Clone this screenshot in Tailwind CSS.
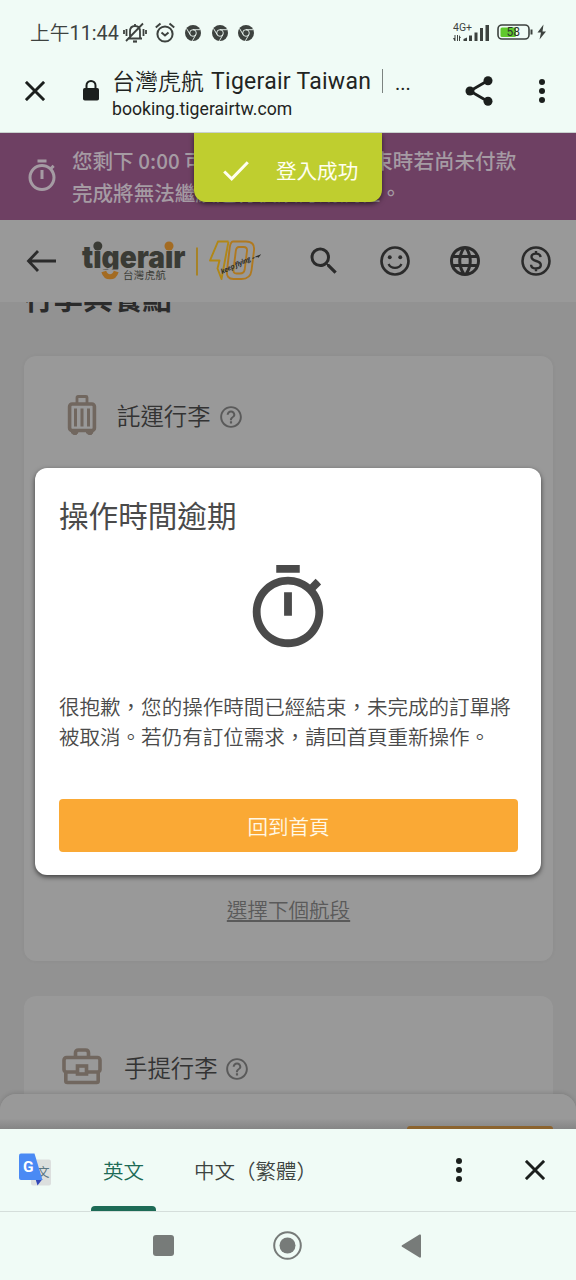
<!DOCTYPE html>
<html lang="zh-Hant">
<head>
<meta charset="utf-8">
<title>台灣虎航 Tigerair Taiwan</title>
<script src="https://cdn.jsdelivr.net/npm/@tailwindcss/browser@4"></script>
</head>
<body class="w-[576px] h-[1280px] overflow-hidden bg-[#f0fbf6] font-['Noto_Sans_CJK_TC',sans-serif]">
<svg class="hidden">
  <symbol id="timer" viewBox="0 0 24 24"><path fill="currentColor" d="M15 1H9v2h6V1zm-4 13h2V8h-2v6zm8.03-6.61l1.42-1.42c-.43-.51-.9-.99-1.41-1.41l-1.42 1.42C16.07 4.74 14.12 4 12 4c-4.97 0-9 4.03-9 9s4.02 9 9 9 9-4.03 9-9c0-2.12-.74-4.07-1.97-5.61zM12 20c-3.87 0-7-3.13-7-7s3.13-7 7-7 7 3.13 7 7-3.13 7-7 7z"/></symbol>
  <symbol id="help" viewBox="0 0 24 24"><path fill="currentColor" d="M11 18h2v-2h-2v2zm1-16C6.48 2 2 6.48 2 12s4.48 10 10 10 10-4.48 10-10S17.52 2 12 2zm0 18.2c-4.5 0-8.2-3.7-8.2-8.2s3.7-8.2 8.2-8.2 8.2 3.7 8.2 8.2-3.7 8.2-8.2 8.2zm0-14.2c-2.21 0-4 1.79-4 4h1.9c0-1.1.9-2.1 2.1-2.1s2.1 1 2.1 2.1c0 2-3.1 1.75-3.1 5h1.9c0-2.25 3.1-2.5 3.1-5 0-2.21-1.79-4-4-4z"/></symbol>
  <symbol id="chrome" viewBox="0 0 16 16"><circle cx="8" cy="8" r="8" fill="#3d423f"/><g fill="none" stroke="#f0fbf6" stroke-width=".9"><circle cx="8" cy="8" r="3.3"/><path d="M8 4.7h7.2M5.1 9.6 1.6 3.6M10.9 9.6 7.4 15.8"/></g></symbol>
  <symbol id="cross" viewBox="0 0 20 20"><path d="M.9.9l18.2 18.2M19.1.9.9 19.1" stroke="#1b1f1d" stroke-width="2.9" fill="none"/></symbol>
  <symbol id="dots" viewBox="0 0 6 24"><g fill="#1b1f1d"><circle cx="3" cy="3" r="3"/><circle cx="3" cy="12" r="3"/><circle cx="3" cy="21" r="3"/></g></symbol>
</svg>
<div class="flex h-full flex-col">

  <div class="flex h-[58px] shrink-0 items-center pt-[7px] pl-[30px] text-[#3d423f]">
    <div class="w-[90px] whitespace-nowrap text-[19.800px] leading-[24px] font-[Roboto,'Noto_Sans_CJK_TC',sans-serif]"><span class="font-[350] font-['Noto_Sans_CJK_TC']">上午</span>11:44</div>
    <svg class="ml-[3px] h-[22px] w-[24px]" viewBox="0 0 24 22" fill="none" stroke="#3d423f" stroke-width="1.8"><path d="M5 16.500h14M7 16V9.500C7 6 9 4 12 4s5 2 5 5.500V16M12 4V2M3 19 20 1.500M1 8v4M3.500 7v7M20.500 7v7M23 8v4"/><path d="M10 19.500h4" stroke-width="2.200"/></svg>
    <svg class="ml-[8px] h-[22px] w-[20px]" viewBox="0 0 20 22" fill="none" stroke="#3d423f" stroke-width="2"><circle cx="10" cy="12" r="7.600"/><path d="M.8 5.500 5.500 1.500M19.200 5.500 14.500 1.500M6.500 10.500 10 13.500 13.500 10.500"/></svg>
    <svg class="ml-[10px] size-4"><use href="#chrome"/></svg>
    <svg class="ml-[11px] size-4"><use href="#chrome"/></svg>
    <svg class="ml-[10px] size-4"><use href="#chrome"/></svg>
    <svg class="ml-[199px] h-[20px] w-[37px]" viewBox="0 0 37 20"><text x="0" y="8" font-family="Roboto" font-size="10" textLength="19" lengthAdjust="spacingAndGlyphs" fill="#3d423f">4G+</text><g fill="#3d423f"><path d="M2.500 12v6H1.500L0 15h1.500v-3zM4 12h1v6H4zM6 12l2 3H7v3H6z"/><path d="M10.500 18v-2l3.500-1.500V18zM16 18v-5.500h3V18zM21.500 18V9.500h3V18zM27 18V5h3v13zM32.500 18V2h3.500v16z"/></g></svg>
    <svg class="ml-[7px] -mt-[1px] h-[18px] w-[50px]" viewBox="0 0 50 18"><rect x="1" y="2" width="31" height="14" rx="4" fill="none" stroke="#3d423f" stroke-width="1.600"/><rect x="3.500" y="4.500" width="15.500" height="9.500" rx="1.500" fill="#5fc92c"/><text x="9.500" y="13.300" font-family="Roboto" font-size="12" textLength="13.500" fill="#2e332f">58</text><path d="M34.500 6.500v5" stroke="#3d423f" stroke-width="2"/><path d="M46.500 1.500 40.500 9.500h3.500l-1.500 7L49 8.500h-3.500z" fill="#3d423f"/></svg>
  </div>

  <div class="flex h-[75px] shrink-0 items-start border-b border-[#c9d2ce] pl-[25px]">
    <svg class="mt-[23px] size-5"><use href="#cross"/></svg>
    <svg class="mt-[22px] ml-[38px] h-[21px] w-[16px]" viewBox="0 0 16 21"><path d="M3.500 9V5.500a4.500 4.500 0 0 1 9 0V9" fill="none" stroke="#1b1f1d" stroke-width="2"/><rect y="8" width="16" height="12.500" rx="1.800" fill="#1b1f1d"/></svg>
    <div class="mt-[8px] ml-[13px] w-[330px] whitespace-nowrap text-[#1f2422] font-[Roboto,'Noto_Sans_CJK_TC',sans-serif]">
      <div class="flex h-[30px] items-center text-[23px] leading-[30px]"><span class="-mt-[3px] font-[350] font-['Noto_Sans_CJK_TC']">台灣虎航</span><span class="ml-[7px] mt-[2px] w-[161px] tracking-[0.280px]">Tigerair Taiwan</span><span class="ml-[10px] h-[24px] w-px bg-[#7c8380]"></span><span class="ml-[12px] mt-[4px] text-[20px]">...</span></div>
      <div class="text-[17.650px] leading-[26px]">booking.tigerairtw.com</div>
    </div>
    <svg class="mt-[18px] ml-[23px] h-[30px] w-[28px]" viewBox="0 0 28 30"><path d="M23 4.500 5 15l18 10.500" fill="none" stroke="#1b1f1d" stroke-width="2.800"/><g fill="#1b1f1d"><circle cx="23" cy="4.700" r="4.500"/><circle cx="5" cy="15" r="4.500"/><circle cx="23" cy="25.300" r="4.500"/></g></svg>
    <svg class="mt-[21px] ml-[46px] h-[24px] w-[6px]"><use href="#dots"/></svg>
  </div>

  <div class="relative flex h-[996px] shrink-0 flex-col overflow-hidden bg-[#929292]">
    <div class="flex h-[87px] shrink-0 items-start bg-[#6e4063] pl-[24px] text-[#a59ba3]">
      <svg class="mt-[25px] size-[36px]"><use href="#timer"/></svg>
      <div class="mt-[11px] ml-[12px] whitespace-nowrap text-[20.570px] leading-[32px] font-medium">
        <div>您剩下 0:00 可進行操作，<span class="ml-[3px]">時間結束時若尚未付款</span></div>
        <div>完成將無法繼續進行後續訂購流程。</div>
      </div>
    </div>

    <div class="z-10 flex h-[82px] shrink-0 items-center bg-[#999] pl-[26px] text-[#2b2b2b]">
      <svg class="h-[24px] w-[30px]" viewBox="0 0 30 24" fill="none" stroke="currentColor" stroke-width="2.800"><path d="M30 12H3M12 2 2.500 12 12 22"/></svg>
      <svg class="ml-[25px] h-[44px] w-[180px]" viewBox="0 0 180 44">
        <text x="1" y="28.500" font-family="Inter" font-weight="900" font-size="30" textLength="103.500" lengthAdjust="spacingAndGlyphs" fill="#3a3b35">tigerair</text>
        <path d="M18 30.500h24v8H18z" fill="#999"/><path d="M22.800 32.500c1 3.500 3 5.300 6.200 5.300s5.200-1.800 6.200-5.300" fill="none" stroke="#a36b22" stroke-width="5"/>
        <path d="M11.500 1h10v10h-10z" fill="#999"/><circle cx="16.800" cy="7" r="4.500" fill="#3a3b35"/>
        <path d="M83 1h11v10H83z" fill="#999"/><circle cx="88" cy="7" r="4.500" fill="#a36b22"/>
        <text x="42" y="39.500" font-family="Noto Sans CJK TC" font-size="10.500" textLength="43" fill="#3a3b35">台灣虎航</text>
        <path d="M116 8.500v28" stroke="#a8801c" stroke-width="1.800"/>
        <g fill="none" stroke="#b18716" stroke-width="1.900" stroke-linejoin="round"><path d="M147.500 2.500H137L129 21.500H138.500L136.500 29.500L140.500 40L147.500 2.500"/><path stroke="#b0791f" d="M152 2.500h13q9 0 8 9l-2.500 20q-1 8.500-10 8.500h-8q-7.500 0-6.500-8.500l2.500-21q.8-8 3.500-8z"/><path stroke="#b0791f" d="M158 8h4.500q4 0 3.500 4l-2.300 18.500q-.7 4-4.700 4h-3.500q-3.500 0-3-4l2.300-18.500q.5-4 3.200-4z"/></g>
        <text transform="translate(141 35) rotate(-25)" font-family="Open Sans" font-style="italic" font-weight="700" font-size="6.800" textLength="32" fill="#2f2f2b">keep flying</text>
        <path d="M171.500 19.500l2-1M174.500 18l4-1.500-1.500 2" stroke="#2f2f2b" stroke-width="1.100" fill="none"/>
      </svg>
      <svg class="ml-[45px] -mt-[1px] size-[36px]" viewBox="0 0 24 24"><path fill="currentColor" d="M15.500 14h-.79l-.28-.27A6.471 6.471 0 0 0 16 9.500 6.500 6.500 0 1 0 9.500 16c1.610 0 3.090-.59 4.230-1.570l.27.28v.79l5 4.990L20.490 19l-4.990-5zm-6 0C7.010 14 5 11.990 5 9.500S7.010 5 9.500 5 14 7.010 14 9.500 11.990 14 9.500 14z"/></svg>
      <svg class="ml-[34.500px] size-[36px]" viewBox="0 0 24 24"><circle cx="12" cy="12" r="9" fill="none" stroke="currentColor" stroke-width="1.800"/><circle cx="8.500" cy="9.500" r="1.300" fill="currentColor"/><circle cx="15.500" cy="9.500" r="1.300" fill="currentColor"/><path d="M7.700 14c1.600 3.400 7 3.400 8.600 0" stroke="currentColor" stroke-width="1.500" fill="none"/></svg>
      <svg class="ml-[34.500px] size-[36px]" viewBox="0 0 24 24"><path fill="currentColor" d="M11.990 2C6.470 2 2 6.480 2 12s4.470 10 9.990 10C17.520 22 22 17.520 22 12S17.520 2 11.990 2zm6.930 6h-2.950c-.32-1.250-.78-2.450-1.380-3.560 1.840.63 3.370 1.910 4.330 3.560zM12 4.040c.83 1.200 1.480 2.530 1.910 3.960h-3.820c.43-1.430 1.080-2.760 1.910-3.960zM4.260 14C4.100 13.360 4 12.690 4 12s.1-1.360.26-2h3.380c-.08.66-.14 1.320-.14 2 0 .68.06 1.340.14 2H4.260zm.82 2h2.950c.32 1.250.78 2.450 1.380 3.560-1.840-.63-3.370-1.900-4.330-3.560zm2.950-8H5.080c.96-1.660 2.490-2.930 4.330-3.560C8.810 5.550 8.350 6.750 8.030 8zM12 19.960c-.83-1.200-1.480-2.530-1.910-3.960h3.820c-.43 1.430-1.080 2.760-1.910 3.960zM14.340 14H9.660c-.09-.66-.16-1.320-.16-2 0-.68.07-1.350.16-2h4.680c.09.65.16 1.320.16 2 0 .68-.07 1.340-.16 2zm.25 5.560c.6-1.110 1.060-2.310 1.380-3.560h2.950c-.96 1.650-2.490 2.930-4.330 3.560zM16.360 14c.08-.66.14-1.320.14-2 0-.68-.06-1.340-.14-2h3.380c.16.64.26 1.310.26 2s-.1 1.360-.26 2h-3.380z"/></svg>
      <svg class="ml-[34.500px] size-[36px]" viewBox="0 0 24 24" fill="none" stroke="currentColor"><circle cx="12" cy="12" r="9" stroke-width="1.700"/><path d="M15 9.400c-.1-1.500-1.200-2.300-3-2.300s-3 .9-3 2.300c0 1.600 1.400 2.100 3.100 2.600 1.800.5 3.100 1.100 3.100 2.700 0 1.400-1.200 2.300-3.200 2.300s-3.200-.9-3.300-2.500M12 5.300v2M12 16.800v2" stroke-width="1.600"/></svg>
    </div>

    <div class="flex flex-col pl-[24px]">
      <h1 class="-mt-[25px] h-[44px] text-[29.600px] leading-[40px] font-bold text-[#2b2b2b]">行李與餐點</h1>
      <section class="mt-[35px] flex h-[605px] w-[529px] flex-col justify-between rounded-xl bg-[#999] shadow-[0_0_4px_rgba(0,0,0,0.04)]">
        <div class="flex items-start pt-[38px] pl-[43px] text-[#333]">
          <svg class="h-[41px] w-[30px]" viewBox="0 0 30 41" fill="none" stroke="#71675f" stroke-width="3"><path d="M10 9V3.500Q10 2.500 11 2.500h8q1 0 1 1V9" stroke-width="2.800"/><rect x="2.600" y="10" width="24.800" height="26.500" rx="2.500" stroke-width="3.600"/><path d="M8.500 14.500v18M15 14.500v18M21.500 14.500v18"/><path d="M4 38.500h7l-1.500 2h-3zM19 38.500h7l-1.500 2h-3z" fill="#71675f" stroke-width="1"/></svg>
          <span class="ml-[20px] mt-[3px] w-[94px] whitespace-nowrap text-[23.400px] leading-[36px] font-[350]">託運行李</span>
          <svg class="mt-[10px] ml-[6.500px] size-[26px] text-[#5a5a5a]"><use href="#help"/></svg>
        </div>
        <div class="mb-[35px] text-center text-[20.570px] leading-[34px] font-[350] text-[#5a5a5a] underline underline-offset-[2px] decoration-2">選擇下個航段</div>
      </section>
      <section class="mt-[35px] flex h-[140px] w-[529px] items-start rounded-xl bg-[#999] pt-[52px] pl-[38px] text-[#333]">
        <svg class="h-[37px] w-[40px]" viewBox="0 0 40 37" fill="none" stroke="#71675f" stroke-width="3.600"><path d="M13.500 9V5q0-3 3-3h7q3 0 3 3v4"/><rect x="2" y="9.500" width="36" height="14.500" rx="2.500"/><path d="M3.800 24v9q0 1.500 1.500 1.500h29.400q1.500 0 1.500-1.500v-9"/><rect x="15.500" y="18" width="9" height="8" fill="#999"/></svg>
        <span class="ml-[22px] mt-[1px] w-[94px] whitespace-nowrap text-[23.400px] leading-[36px] font-[350]">手提行李</span>
        <svg class="mt-[8px] ml-[5.500px] size-[26px] text-[#5a5a5a]"><use href="#help"/></svg>
      </section>
    </div>

    <div class="absolute inset-x-0 bottom-0 z-20 flex h-[35px] items-end justify-end rounded-t-2xl bg-[linear-gradient(#999_70%,#858585)] pr-[23px] shadow-[0_-1px_4px_rgba(0,0,0,0.14)]">
      <div class="h-[3px] w-[146px] rounded-t-sm bg-[#8b632e]"></div>
    </div>

    <div class="absolute top-0 left-[194px] z-30 flex h-[69px] w-[188px] items-center rounded-b-xl bg-[#bfce2f] pt-[6px] pl-[29px] text-[#fffff0] shadow-[0_2px_5px_rgba(0,0,0,0.55)]">
      <svg class="h-[20px] w-[26px]" viewBox="0 0 26 20" fill="none" stroke="currentColor" stroke-width="3"><path d="M1.200 10.500l7.500 7.300L24.800 1.300"/></svg>
      <span class="ml-[27px] -mt-[2px] text-[20.570px] leading-[30px]">登入成功</span>
    </div>

    <div class="absolute top-[335px] left-[35px] z-30 flex h-[407px] w-[506px] flex-col rounded-xl bg-white px-[24px] text-[#4a4a4a] shadow-[0_2px_5px_rgba(0,0,0,0.6)]">
      <h2 class="mt-[27px] text-[29.600px] leading-[40px]">操作時間逾期</h2>
      <svg class="mx-auto mt-[26px] size-[94px] shrink-0"><use href="#timer"/></svg>
      <div class="mt-[36px] whitespace-nowrap text-[20.540px] leading-[30px] font-[350]"><div>很抱歉，您的操作時間已經結束，未完成的訂單將</div><div>被取消。若仍有訂位需求，請回首頁重新操作。</div></div>
      <button class="mt-[48px] h-[53px] w-[459px] shrink-0 rounded bg-[#faa935] text-[20.570px] leading-[30px] font-[350] text-[#fff8e6]">回到首頁</button>
    </div>
  </div>

  <div class="flex h-[83px] shrink-0 items-start border-b border-[#d5dedb] pl-[19px]">
    <svg class="mt-[24px] h-[34px] w-[33px]" viewBox="0 0 33 34"><rect x="12" y="6.500" width="20" height="26" rx="2" fill="#dcdfde"/><text x="18" y="24" font-family="Noto Sans CJK TC" font-size="12.500" fill="#5b7683">文</text><path d="M16.500 26h7l-5 6.500z" fill="#3147b8"/><path d="M2 .5h13.500L23.500 27H2q-2 0-2-2V2.500q0-2 2-2z" fill="#4a8af4"/><text x="4" y="19" font-family="Roboto" font-weight="700" font-size="15.500" fill="#fff">G</text></svg>
    <div class="ml-[39px] flex h-[82px] w-[65px] flex-col items-center justify-between">
      <span class="mt-[26px] text-[20.500px] leading-[30px] font-[350] text-[#1d6b56]">英文</span>
      <span class="h-[5px] w-full rounded-t bg-[#1d6b56]"></span>
    </div>
    <span class="mt-[26px] ml-[38px] w-[130px] whitespace-nowrap text-[20.500px] leading-[30px] font-[350] text-[#3d4441]">中文（繁體）</span>
    <svg class="mt-[28.500px] ml-[132px] h-[24px] w-[6px]"><use href="#dots"/></svg>
    <svg class="mt-[31px] ml-[63px] size-5"><use href="#cross"/></svg>
  </div>

  <div class="flex h-[68px] shrink-0 items-center pb-[1px] pl-[153px]">
    <span class="size-[21px] rounded-[3px] bg-[#777b79]"></span>
    <svg class="ml-[99px] size-[29px]" viewBox="0 0 29 29"><circle cx="14.500" cy="14.500" r="13.300" fill="none" stroke="#777b79" stroke-width="2"/><circle cx="14.500" cy="14.500" r="8" fill="#777b79"/></svg>
    <svg class="ml-[99px] h-[24px] w-[21px]" viewBox="0 0 21 24"><path d="M1 11.300 18.500.5q1.500-.5 1.500 1v21q0 1.500-1.500 1L1 12.700q-1-.7 0-1.400z" fill="#777b79"/></svg>
  </div>
</div>
</body>
</html>
